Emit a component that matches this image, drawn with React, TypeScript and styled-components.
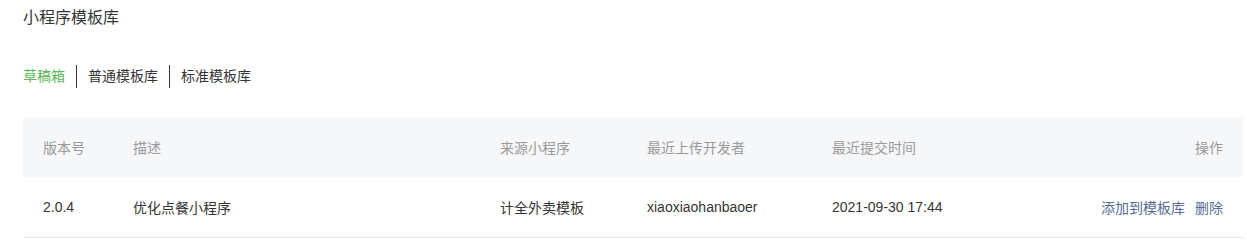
import React from "react";
import styled, { createGlobalStyle } from "styled-components";

const Global = createGlobalStyle`
  body {
    margin: 0;
    background: #ffffff;
    font-family: "Liberation Sans", "Noto Sans CJK SC", sans-serif;
    color: #353535;
  }
`;

const Page = styled.div`
  padding: 7px 4px 0 23px;
`;

const Title = styled.h2`
  margin: 0;
  font-size: 16px;
  font-weight: 400;
  line-height: 22px;
  color: #353535;
`;

const Tabs = styled.div`
  display: flex;
  align-items: center;
  margin-top: 36px;
  height: 23px;
`;

const Tab = styled.span<{ $active?: boolean }>`
  font-size: 14px;
  line-height: 23px;
  color: ${(p) => (p.$active ? "#5cb85a" : "#353535")};
  cursor: pointer;
`;

const Divider = styled.span`
  width: 1px;
  height: 23px;
  background: #353535;
  margin: 0 11px;
`;

const Table = styled.table`
  margin-top: 29px;
  width: 1220px;
  border-collapse: collapse;
  table-layout: fixed;
  font-size: 14px;
`;

const Th = styled.th<{ $w?: number; $right?: boolean }>`
  width: ${(p) => (p.$w ? `${p.$w}px` : "auto")};
  height: 60px;
  padding: 0 20px;
  background: #f6f7f9;
  color: #9a9a9a;
  font-weight: 400;
  text-align: ${(p) => (p.$right ? "right" : "left")};
  box-sizing: border-box;
`;

const Td = styled.td<{ $right?: boolean }>`
  height: 60px;
  padding: 0 20px;
  color: #353535;
  border-bottom: 1px solid #e7e7eb;
  text-align: ${(p) => (p.$right ? "right" : "left")};
  box-sizing: border-box;
  white-space: nowrap;
`;

const Link = styled.a`
  color: #576b95;
  text-decoration: none;
  cursor: pointer;
  & + & {
    margin-left: 10px;
  }
`;

export default function App() {
  return (
    <>
      <Global />
      <Page>
        <Title>小程序模板库</Title>
        <Tabs>
          <Tab $active>草稿箱</Tab>
          <Divider />
          <Tab>普通模板库</Tab>
          <Divider />
          <Tab>标准模板库</Tab>
        </Tabs>
        <Table>
          <thead>
            <tr>
              <Th $w={90}>版本号</Th>
              <Th $w={367}>描述</Th>
              <Th $w={147}>来源小程序</Th>
              <Th $w={185}>最近上传开发者</Th>
              <Th $w={185}>最近提交时间</Th>
              <Th $right>操作</Th>
            </tr>
          </thead>
          <tbody>
            <tr>
              <Td>2.0.4</Td>
              <Td>优化点餐小程序</Td>
              <Td>计全外卖模板</Td>
              <Td>xiaoxiaohanbaoer</Td>
              <Td>2021-09-30 17:44</Td>
              <Td $right>
                <Link>添加到模板库</Link>
                <Link>删除</Link>
              </Td>
            </tr>
          </tbody>
        </Table>
      </Page>
    </>
  );
}
